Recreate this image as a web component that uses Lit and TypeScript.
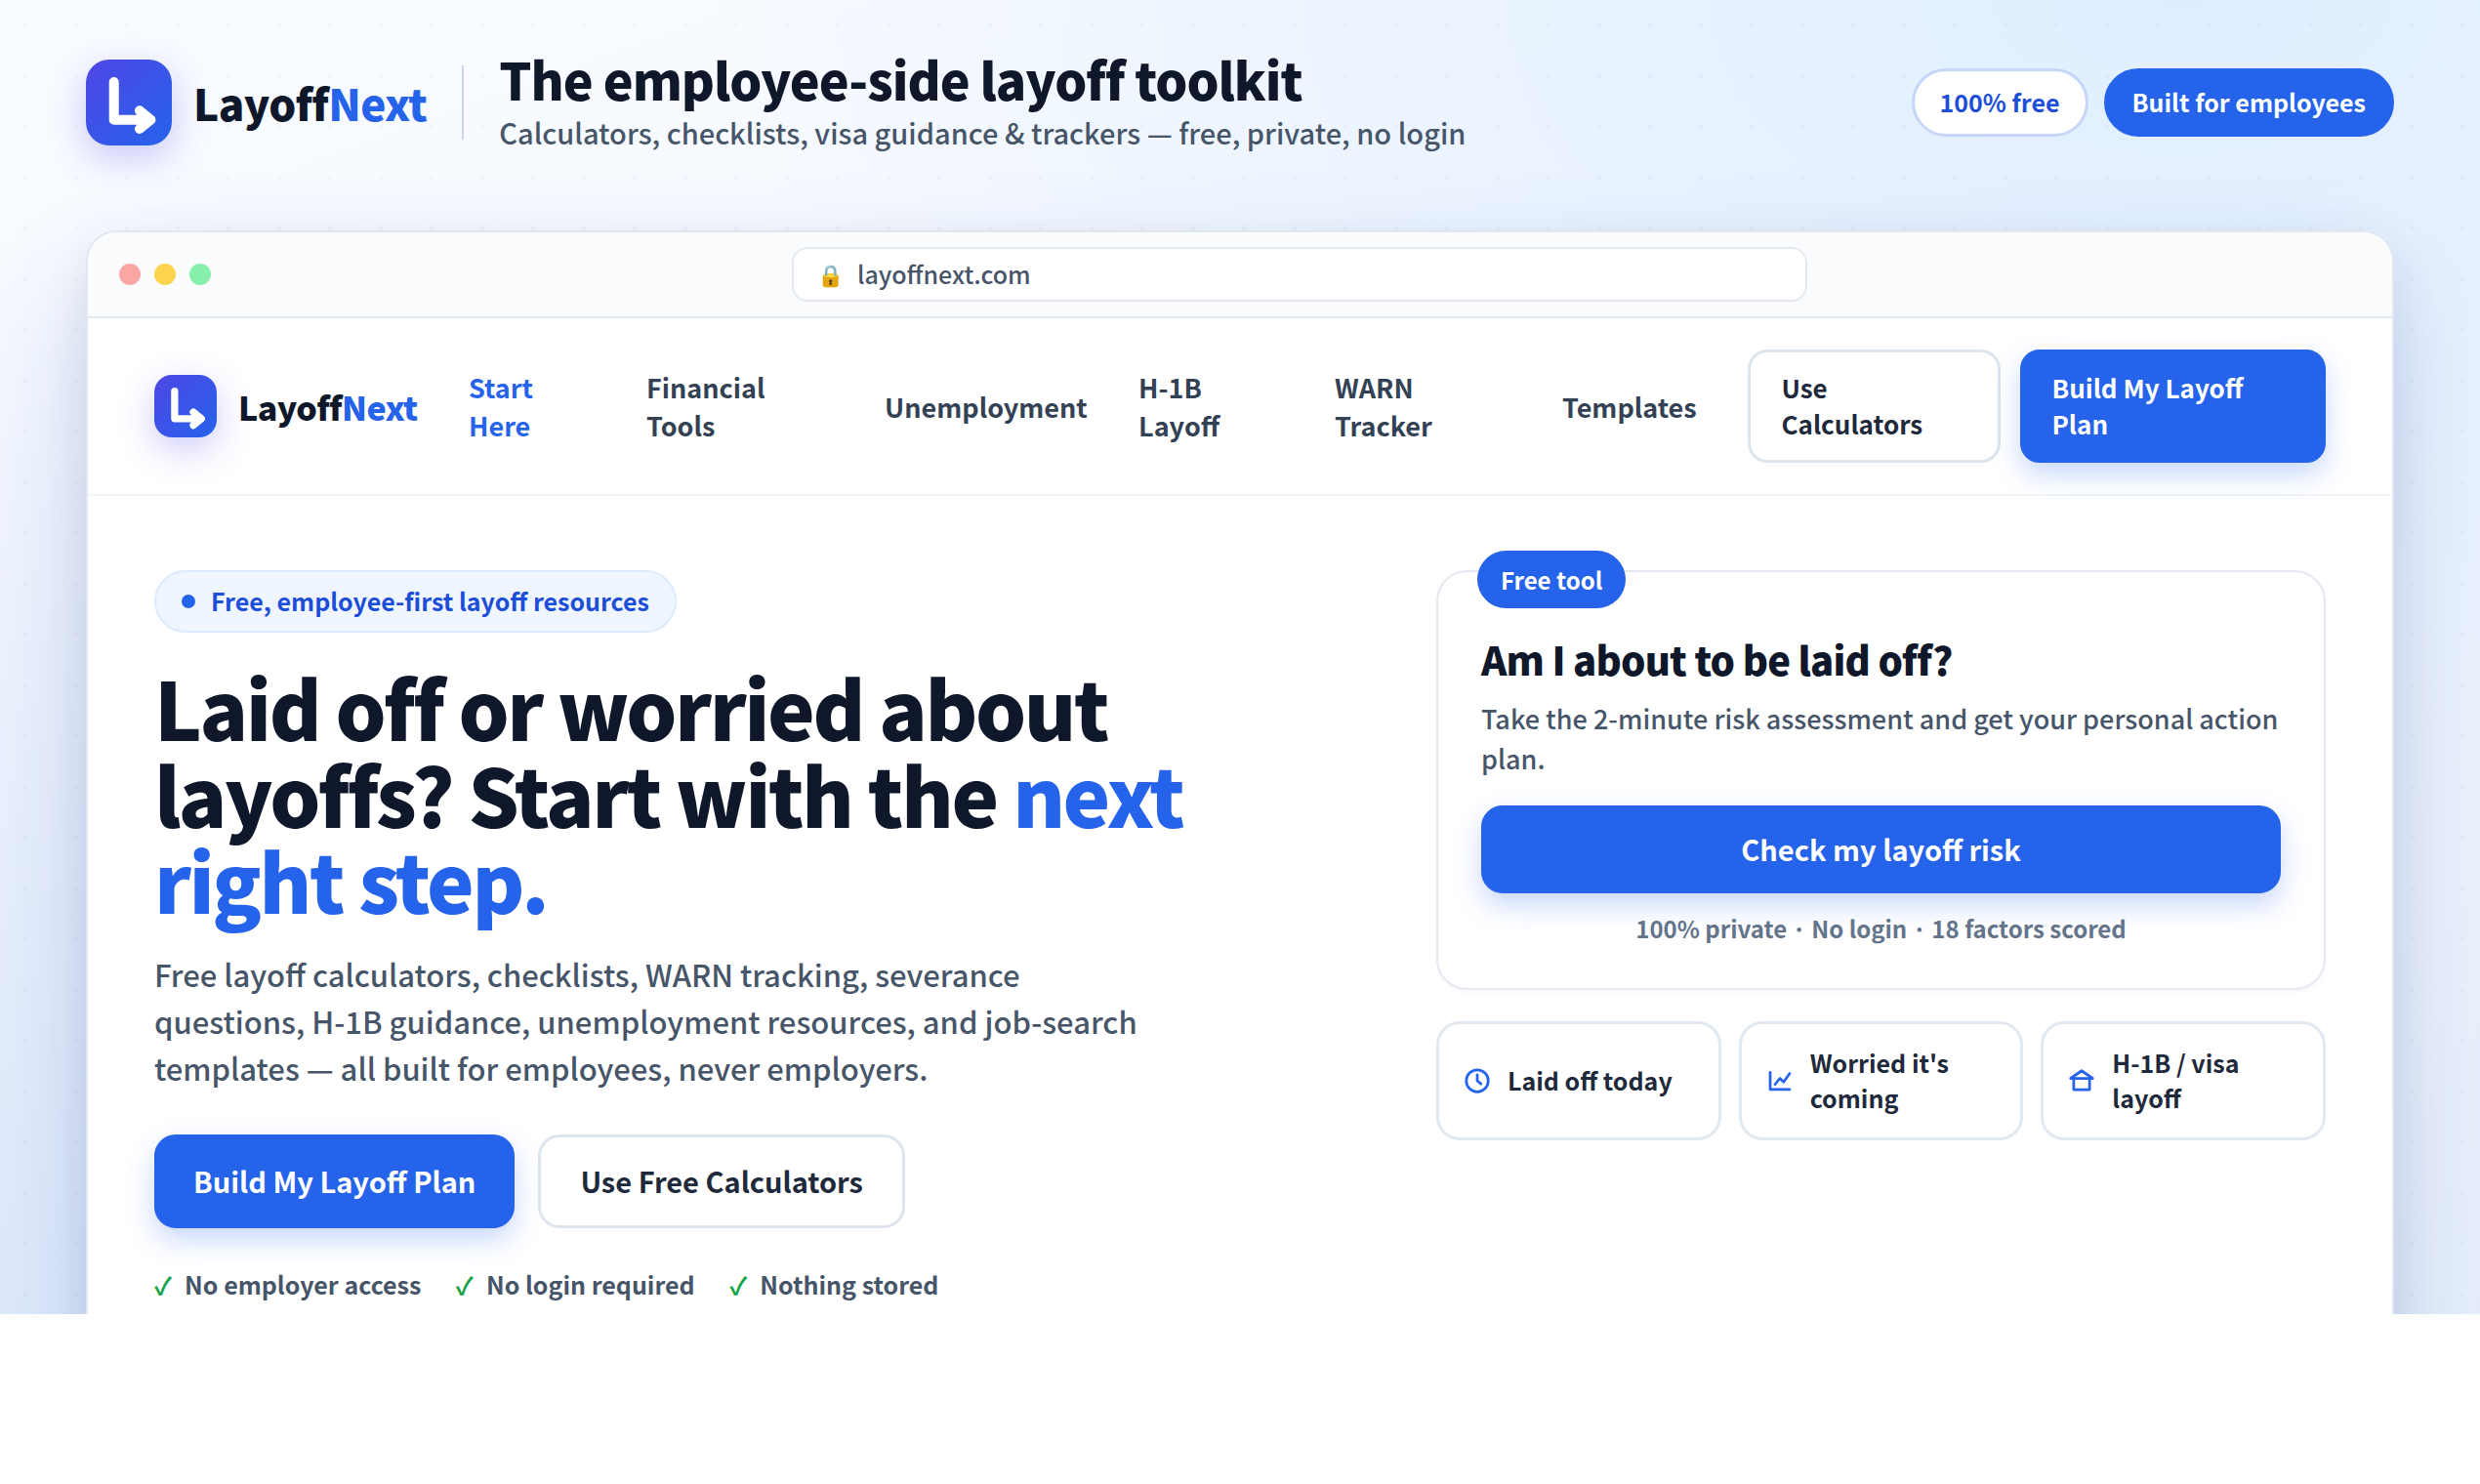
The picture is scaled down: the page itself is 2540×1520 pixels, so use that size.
import { LitElement, html, css, svg } from "lit";
import { customElement, property } from "lit/decorators.js";

@customElement("brand-mark")
export class BrandMark extends LitElement {
  static styles = css`
    :host { display: block; flex: none; }
    .mark { display: block; width: 100%; height: 100%; overflow: visible; }
    .arrow { fill: none; stroke: #fff; stroke-width: 10; stroke-linecap: round; stroke-linejoin: round; }
  `;
  render() {
    return html`<svg class="mark" viewBox="0 0 88 88">
      <path class="arrow" d="M28.7 23V61.7H66M55 52.3L66.4 61.7L55 71" />
    </svg>`;
  }
}

const icons = {
  clock: svg`<circle cx="12" cy="12" r="9" /><path d="M12 7v5l3 2.5" />`,
  chart: svg`<path d="M4 5v14h16M8 15l4-5 3 3 5-7" />`,
  house: svg`<path d="M3 10l9-6.2 9 6.2zM5.5 10v9.2h13V10" />`,
};

@customElement("choice-card")
export class ChoiceCard extends LitElement {
  @property() icon: keyof typeof icons = "clock";
  @property() label = "";
  static styles = css`
    :host {
      display: flex; align-items: center; gap: 16px; box-sizing: border-box;
      padding: 21px 18px 23px 24px; min-height: 122px;
      border: 3px solid #e2e8f0; border-radius: 24px; background: #fff;
    }
    .icon {
      width: 30px; height: 30px; flex: none; fill: none; stroke: #2563eb; margin-top: 2px;
      stroke-width: 2.2; stroke-linecap: round; stroke-linejoin: round;
    }
    .label { font-size: 25px; font-weight: 700; color: #1e293b; }
  `;
  render() {
    return html`<svg class="icon" viewBox="0 0 24 24">${icons[this.icon]}</svg>
      <span class="label">${this.label}</span>`;
  }
}

const links = [
  { label: "Start Here", width: 130, active: true },
  { label: "Financial Tools", width: 192 },
  { label: "Unemployment", width: 208 },
  { label: "H-1B Layoff", width: 149 },
  { label: "WARN Tracker", width: 181 },
  { label: "Templates", width: 138 },
];

const promises = ["No employer access", "No login required", "Nothing stored"];

@customElement("app-root")
export class AppRoot extends LitElement {
  static styles = css`
    * { box-sizing: border-box; }
    :host {
      display: block; width: 2540px; height: 1520px; background: #fff; overflow: hidden;
      font-family: "Noto Sans CJK JP", "Noto Sans", sans-serif; color: #0f172a;
    }
    h1, h2, h3, p { margin: 0; }
    .stage {
      height: 1346px; overflow: hidden; padding: 52px 88px 0;
      background:
        radial-gradient(circle at 26px 26px, rgba(71, 85, 105, 0.04) 1.5px, transparent 2.5px) 0 0 / 52px 52px,
        radial-gradient(1500px 900px at 88% 0%, #dfeeff 0%, rgba(223, 238, 255, 0) 100%),
        radial-gradient(1400px 1100px at 0% 100%, #dfeafb 0%, rgba(223, 234, 251, 0) 100%),
        linear-gradient(160deg, #f8fbff 0%, #f5f8ff 45%, #e7effb 100%);
    }
    .header { display: flex; align-items: center; height: 106px; }
    .tile {
      background: linear-gradient(135deg, #4f46e5, #2563eb);
      box-shadow: 0 12px 36px rgba(79, 70, 229, 0.28);
    }
    .tile.large { width: 88px; height: 88px; border-radius: 24px; }
    .tile.small { width: 64px; height: 64px; border-radius: 18px; }
    .name { font-weight: 800; letter-spacing: -0.6px; white-space: nowrap; }
    .name.large { font-size: 44px; margin-left: 22px; }
    .name.small { font-size: 34px; margin-left: 22px; }
    .accent { color: #2563eb; }
    .rule { width: 2px; height: 76px; background: #cbd5f1; margin: 0 36px 0 36px; }
    .headline { font-size: 52px; line-height: 57px; font-weight: 800; letter-spacing: -1px; margin-top: -3px; }
    .tagline { font-size: 29px; font-weight: 500; color: #475569; margin-top: 5px; }
    .pills { display: flex; gap: 16px; margin-left: auto; }
    .pill {
      height: 70px; border-radius: 35px; padding: 0 26px 2px; display: flex; align-items: center;
      font-size: 25px; font-weight: 700; border: 3px solid #c7d5f8; background: #fff; color: #1d4ed8;
    }
    .pill.solid { background: #2563eb; border-color: #2563eb; color: #fff; }

    .window {
      margin-top: 78px; height: 1300px; border: 2px solid #e2e8f2; border-radius: 32px; background: #fff;
      box-shadow: 0 60px 120px rgba(30, 64, 175, 0.18), 0 16px 48px rgba(15, 23, 42, 0.08);
    }
    .toolbar {
      display: flex; align-items: center; height: 88px; padding: 0 32px;
      background: #f9fbfd; border-bottom: 2px solid #e3e8f3; border-radius: 30px 30px 0 0;
    }
    .dots { display: flex; gap: 14px; margin-right: 28px; }
    .dot { width: 22px; height: 22px; border-radius: 50%; }
    .dot.red { background: #fca5a5; }
    .dot.amber { background: #fcd34d; }
    .dot.green { background: #86efac; }
    .address {
      width: 1040px; height: 56px; margin: 0 auto; padding: 0 24px 2px; display: flex; align-items: center;
      gap: 15px; border: 2px solid #e5e9ef; border-radius: 16px; background: #fff;
      font-size: 25px; font-weight: 500; color: #475569;
    }
    .lock { font-size: 22px; width: 26px; text-align: center; }

    .nav {
      display: flex; align-items: center; height: 182px; padding: 0 68px; border-bottom: 2px solid #f1f5f9;
    }
    .links { display: flex; align-items: center; gap: 52px; margin-left: 52.5px; }
    .link { flex: none; font-size: 27px; font-weight: 700; color: #334155; }
    .link.active { color: #2563eb; }
    .actions { display: flex; gap: 20px; margin-left: auto; }
    .button {
      display: flex; align-items: center; border: 3px solid #dde4ee; border-radius: 22px;
      background: #fff; color: #1e293b; font-weight: 700; white-space: nowrap; flex: none;
    }
    .button.primary {
      border-color: #2563eb; background: #2563eb; color: #fff;
      box-shadow: 0 12px 28px rgba(37, 99, 235, 0.25);
    }
    .actions .button { height: 116px; padding: 0 30px 2px 31.5px; font-size: 26px; border-radius: 20px; }
    .actions .button.primary { width: 313px; padding: 0 26px 2px 29.5px; }
    .actions .button.plain { width: 259px; }

    .hero { display: flex; justify-content: space-between; padding: 76px 68px 0; }
    .intro { width: 1090px; }
    .eyebrow {
      display: inline-flex; align-items: center; gap: 16px; height: 64px; padding: 0 26px;
      border: 2px solid #dbeafe; border-radius: 32px; background: #eff6ff;
      color: #1d4ed8; font-size: 25px; font-weight: 700; vertical-align: top;
    }
    .spot { width: 14px; height: 14px; border-radius: 50%; background: #2563eb; }
    .eyebrow-text { padding-bottom: 2px; }
    .title { margin-top: 32px; font-size: 82px; line-height: 88.5px; font-weight: 800; letter-spacing: -0.03em; }
    .lead { margin-top: 28px; width: 1040px; font-size: 31px; line-height: 48px; font-weight: 500; color: #475569; }
    .choices { display: flex; gap: 24px; margin-top: 44px; }
    .choices .button { height: 96px; padding: 0 37px 2px; font-size: 29px; }
    .choices .button.plain { padding: 0 40px 2px; }
    .promises { display: flex; gap: 35.5px; margin-top: 39px; font-size: 25px; font-weight: 700; color: #475569; }
    .promise { display: flex; gap: 13px; }
    .tick { color: #16a34a; }

    .aside { width: 911px; }
    .card {
      position: relative; height: 430px; padding: 60px 44px 44px; border: 2px solid #e4e8f1;
      border-radius: 32px; background: #fff; box-shadow: 0 2px 6px rgba(15, 23, 42, 0.03);
    }
    .badge {
      position: absolute; left: 40px; top: -22px; height: 59px; padding: 0 24px; border-radius: 30px;
      display: flex; align-items: center; background: #2563eb; color: #fff; font-size: 24px; font-weight: 700;
    }
    .question { font-size: 40px; line-height: 58px; font-weight: 800; letter-spacing: -0.8px; }
    .detail { margin-top: 12px; font-size: 27px; line-height: 40.5px; font-weight: 500; color: #475569; }
    .card .button { height: 90px; margin-top: 28px; justify-content: center; font-size: 29px; padding-bottom: 2px; }
    .note { margin-top: 18px; text-align: center; font-size: 24px; font-weight: 700; color: #64748b; }
    .paths { display: grid; grid-template-columns: repeat(3, 1fr); gap: 18px; margin-top: 32px; }
  `;

  private name(size: string) {
    return html`<brand-mark class="tile ${size}"></brand-mark>
      <span class="name ${size}">Layoff<span class="accent">Next</span></span>`;
  }

  render() {
    return html`<div class="stage">
      <header class="header">
        ${this.name("large")}
        <div class="rule"></div>
        <div>
          <h2 class="headline">The employee-side layoff toolkit</h2>
          <p class="tagline">Calculators, checklists, visa guidance &amp; trackers — free, private, no login</p>
        </div>
        <div class="pills">
          <span class="pill">100% free</span>
          <span class="pill solid">Built for employees</span>
        </div>
      </header>
      <main class="window">
        <div class="toolbar">
          <div class="dots"><i class="dot red"></i><i class="dot amber"></i><i class="dot green"></i></div>
          <div class="address"><span class="lock">🔒</span><span>layoffnext.com</span></div>
        </div>
        <nav class="nav">
          ${this.name("small")}
          <div class="links">
            ${links.map((l) => html`<a class="link ${l.active ? "active" : ""}" style="width:${l.width}px">${l.label.split(" ").map((w, i) => (i ? html`<br />${w}` : w))}</a>`)}
          </div>
          <div class="actions">
            <span class="button plain">Use<br />Calculators</span>
            <span class="button primary">Build My Layoff<br />Plan</span>
          </div>
        </nav>
        <section class="hero">
          <div class="intro">
            <span class="eyebrow"><i class="spot"></i><span class="eyebrow-text">Free, employee-first layoff resources</span></span>
            <h1 class="title">Laid off or worried about<br />layoffs? Start with the <span class="accent">next<br />right step.</span></h1>
            <p class="lead">Free layoff calculators, checklists, WARN tracking, severance<br />questions, H-1B guidance, unemployment resources, and job-search<br />templates — all built for employees, never employers.</p>
            <div class="choices">
              <span class="button primary">Build My Layoff Plan</span>
              <span class="button plain">Use Free Calculators</span>
            </div>
            <div class="promises">
              ${promises.map((p) => html`<span class="promise"><span class="tick">✓</span><span>${p}</span></span>`)}
            </div>
          </div>
          <div class="aside">
            <div class="card">
              <span class="badge">Free tool</span>
              <h3 class="question">Am I about to be laid off?</h3>
              <p class="detail">Take the 2-minute risk assessment and get your personal action<br />plan.</p>
              <span class="button primary">Check my layoff risk</span>
              <p class="note">100% private · No login · 18 factors scored</p>
            </div>
            <div class="paths">
              <choice-card icon="clock" label="Laid off today"></choice-card>
              <choice-card icon="chart" label="Worried it's coming"></choice-card>
              <choice-card icon="house" label="H-1B / visa layoff"></choice-card>
            </div>
          </div>
        </section>
      </main>
    </div>`;
  }
}
